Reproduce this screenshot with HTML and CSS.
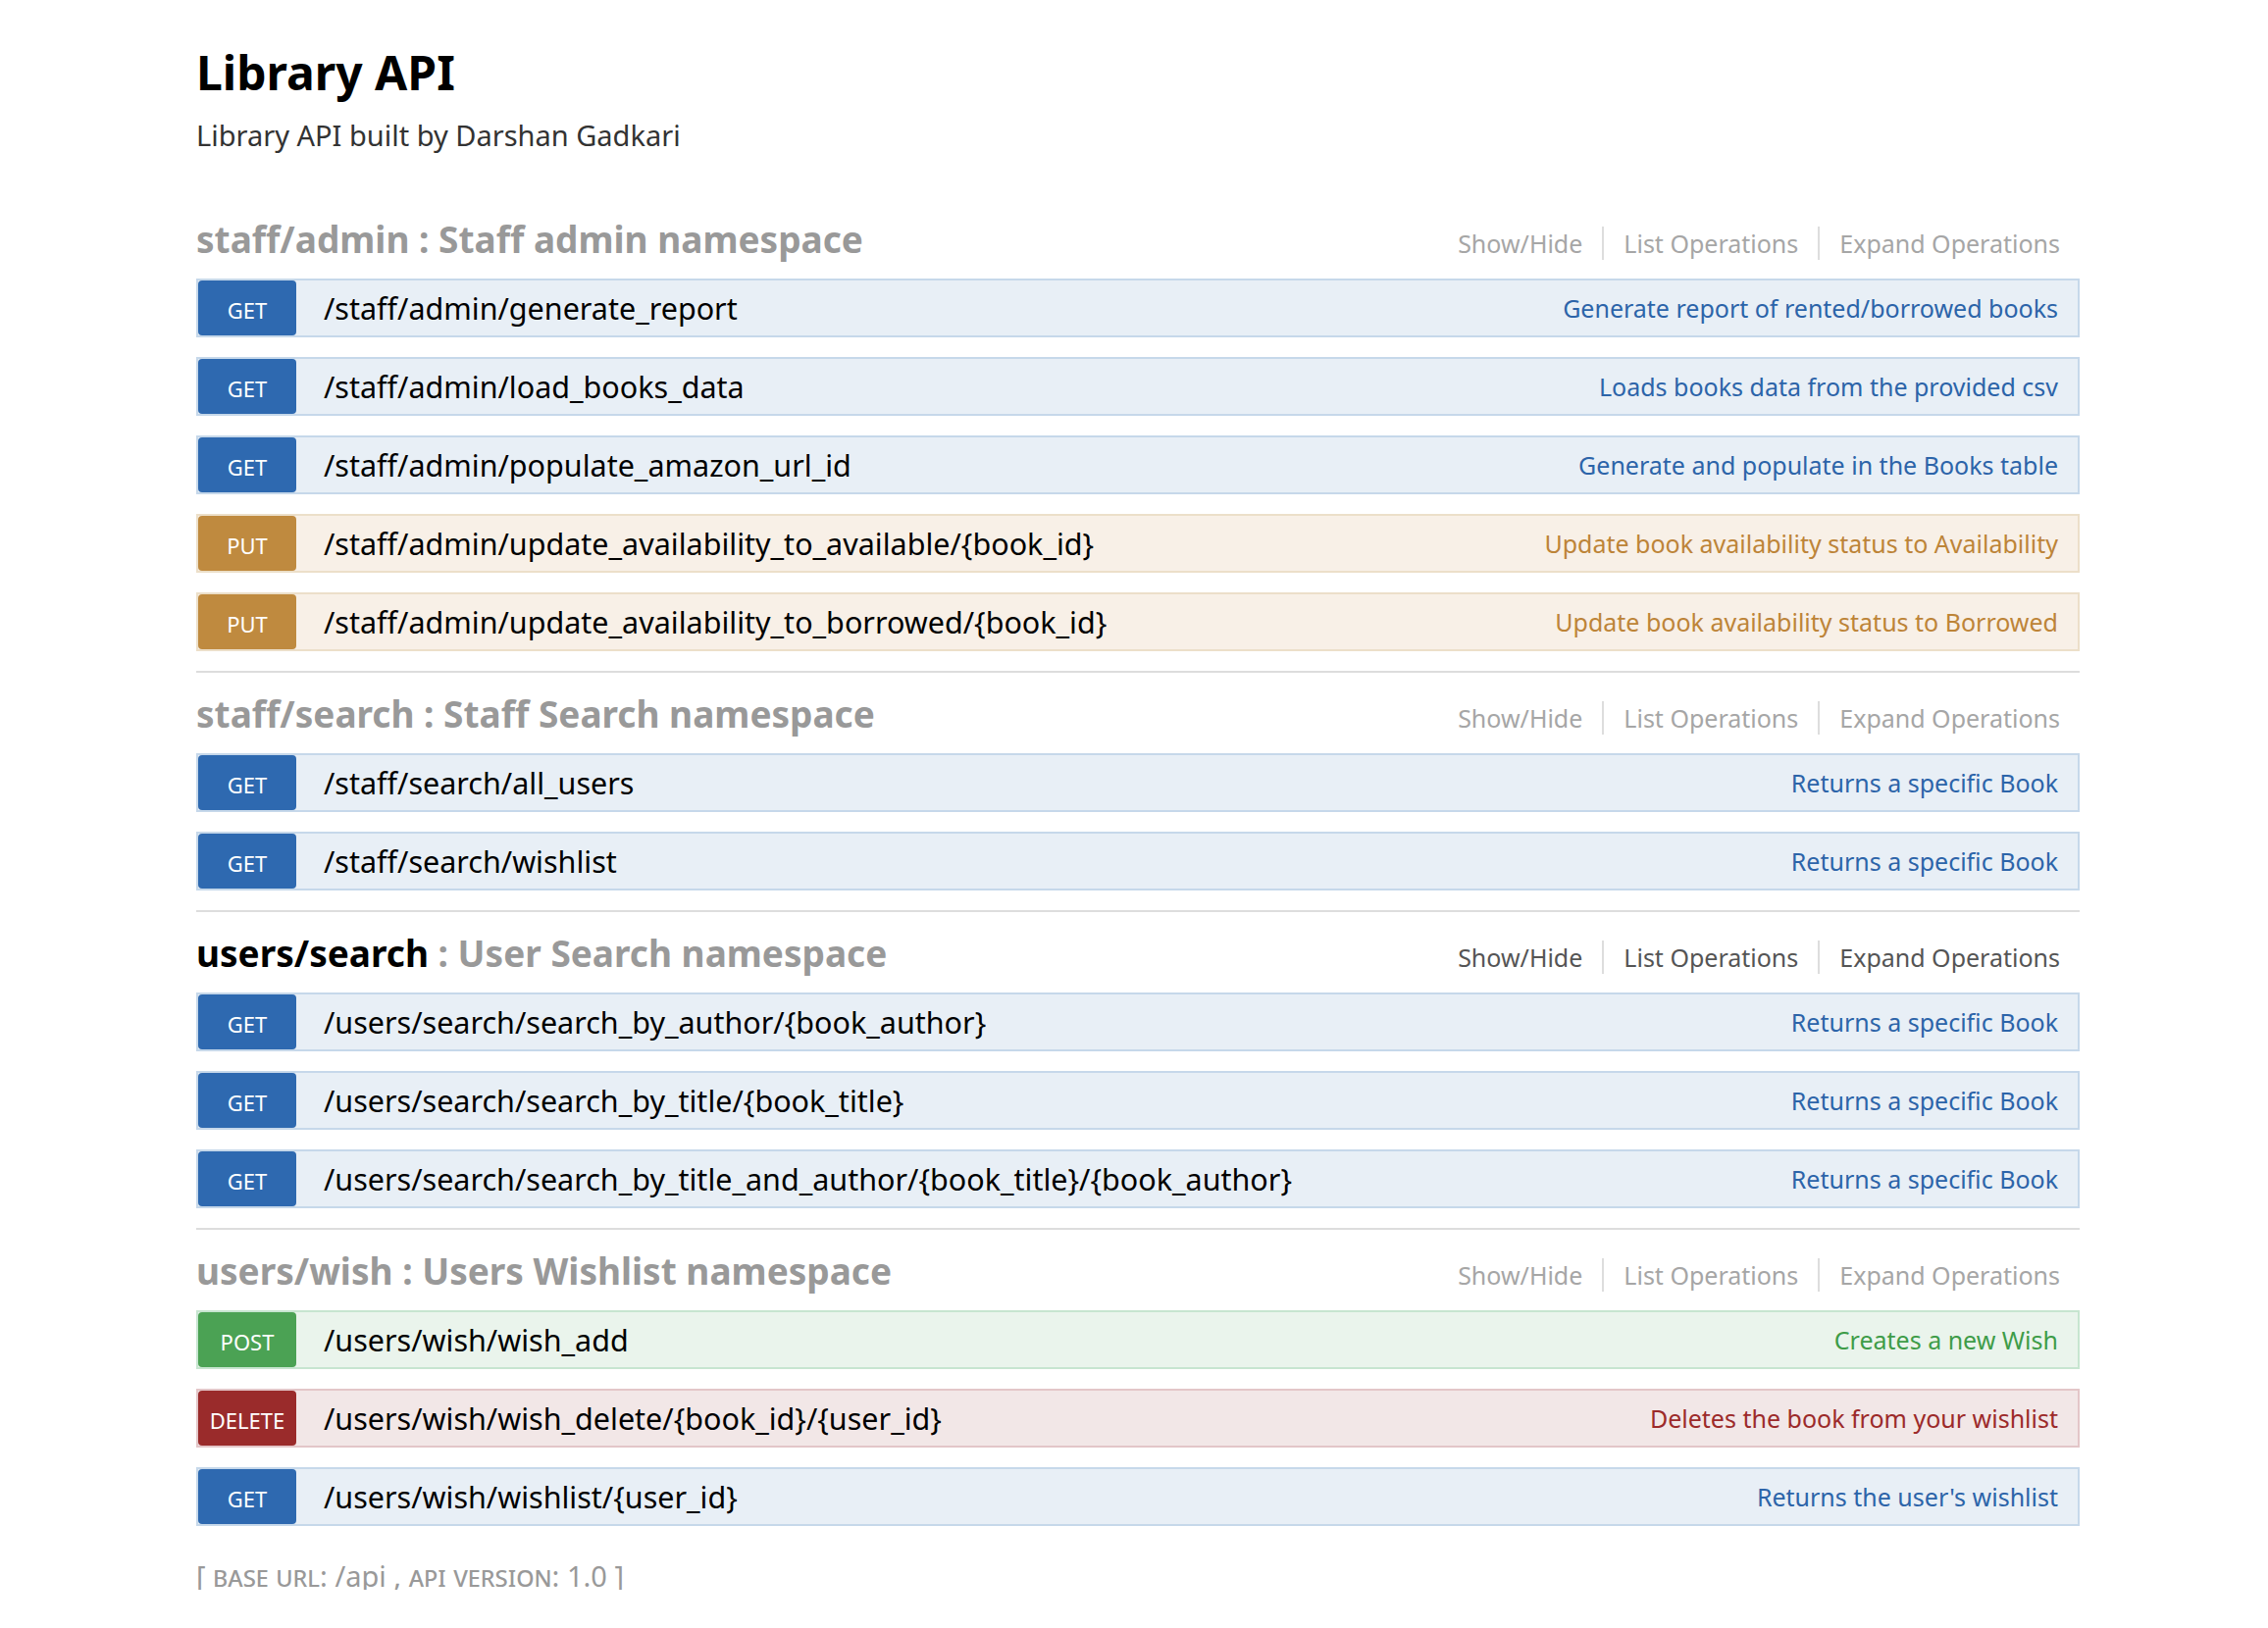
FILE: index.html
```html
<!DOCTYPE html>
<html lang="en">
<head>
<meta charset="utf-8">
<title>Library API</title>
<link rel="stylesheet" href="styles.css">
</head>
<body>
<div class="wrap">
  <div class="info">
    <div class="info-title">Library API</div>
    <div class="info-desc">Library API built by Darshan Gadkari</div>
  </div>

  <ul class="resources">
    <li class="resource">
      <div class="res-heading">
        <h2><a href="#">staff/admin</a> : Staff admin namespace</h2>
        <ul class="options">
          <li><a href="#">Show/Hide</a></li>
          <li><a href="#">List Operations</a></li>
          <li><a href="#">Expand Operations</a></li>
        </ul>
      </div>
      <ul class="ops">
        <li class="op get"><div class="op-heading"><span class="method">GET</span><span class="path">/staff/admin/generate_report</span><span class="summary">Generate report of rented/borrowed books</span></div></li>
        <li class="op get"><div class="op-heading"><span class="method">GET</span><span class="path">/staff/admin/load_books_data</span><span class="summary">Loads books data from the provided csv</span></div></li>
        <li class="op get"><div class="op-heading"><span class="method">GET</span><span class="path">/staff/admin/populate_amazon_url_id</span><span class="summary">Generate and populate in the Books table</span></div></li>
        <li class="op put"><div class="op-heading"><span class="method">PUT</span><span class="path">/staff/admin/update_availability_to_available/{book_id}</span><span class="summary">Update book availability status to Availability</span></div></li>
        <li class="op put"><div class="op-heading"><span class="method">PUT</span><span class="path">/staff/admin/update_availability_to_borrowed/{book_id}</span><span class="summary">Update book availability status to Borrowed</span></div></li>
      </ul>
    </li>

    <li class="resource">
      <div class="res-heading">
        <h2><a href="#">staff/search</a> : Staff Search namespace</h2>
        <ul class="options">
          <li><a href="#">Show/Hide</a></li>
          <li><a href="#">List Operations</a></li>
          <li><a href="#">Expand Operations</a></li>
        </ul>
      </div>
      <ul class="ops">
        <li class="op get"><div class="op-heading"><span class="method">GET</span><span class="path">/staff/search/all_users</span><span class="summary">Returns a specific Book</span></div></li>
        <li class="op get"><div class="op-heading"><span class="method">GET</span><span class="path">/staff/search/wishlist</span><span class="summary">Returns a specific Book</span></div></li>
      </ul>
    </li>

    <li class="resource hovered">
      <div class="res-heading">
        <h2><a href="#">users/search</a> : User Search namespace</h2>
        <ul class="options">
          <li><a href="#">Show/Hide</a></li>
          <li><a href="#">List Operations</a></li>
          <li><a href="#">Expand Operations</a></li>
        </ul>
      </div>
      <ul class="ops">
        <li class="op get"><div class="op-heading"><span class="method">GET</span><span class="path">/users/search/search_by_author/{book_author}</span><span class="summary">Returns a specific Book</span></div></li>
        <li class="op get"><div class="op-heading"><span class="method">GET</span><span class="path">/users/search/search_by_title/{book_title}</span><span class="summary">Returns a specific Book</span></div></li>
        <li class="op get"><div class="op-heading"><span class="method">GET</span><span class="path">/users/search/search_by_title_and_author/{book_title}/{book_author}</span><span class="summary">Returns a specific Book</span></div></li>
      </ul>
    </li>

    <li class="resource">
      <div class="res-heading">
        <h2><a href="#">users/wish</a> : Users Wishlist namespace</h2>
        <ul class="options">
          <li><a href="#">Show/Hide</a></li>
          <li><a href="#">List Operations</a></li>
          <li><a href="#">Expand Operations</a></li>
        </ul>
      </div>
      <ul class="ops">
        <li class="op post"><div class="op-heading"><span class="method">POST</span><span class="path">/users/wish/wish_add</span><span class="summary">Creates a new Wish</span></div></li>
        <li class="op delete"><div class="op-heading"><span class="method">DELETE</span><span class="path">/users/wish/wish_delete/{book_id}/{user_id}</span><span class="summary">Deletes the book from your wishlist</span></div></li>
        <li class="op get"><div class="op-heading"><span class="method">GET</span><span class="path">/users/wish/wishlist/{user_id}</span><span class="summary">Returns the user's wishlist</span></div></li>
      </ul>
    </li>
  </ul>

  <div class="footer">[ <span class="sc">base url</span>: /api , <span class="sc">api version</span>: 1.0 ]</div>
</div>
</body>
</html>
```

FILE: styles.css
```css
* { box-sizing: border-box; }
html, body { margin: 0; padding: 0; background: #fff; }
body {
  font-family: "Noto Sans", "Open Sans", "DejaVu Sans", sans-serif;
  line-height: 1;
  color: #000;
}
.wrap {
  width: 1920px;
  margin-left: 200px;
  padding-top: 49px;
}
.info-title {
  font-size: 48px;
  line-height: 50px;
  font-weight: bold;
  color: #000;
  padding-bottom: 24px;
}
.info-desc {
  font-size: 29px;
  line-height: 30px;
  color: #333;
}
.resources {
  list-style: none;
  margin: 49px 0 0;
  padding: 0;
}
.resource { border-bottom: 2px solid #ddd; }
.resource:last-child { border-bottom: none; }
.res-heading {
  height: 82px;
  display: flex;
  align-items: center;
  justify-content: space-between;
}
.res-heading h2 {
  margin: 0;
  font-size: 37px;
  font-weight: bold;
  line-height: 1;
  color: #999;
}
.res-heading h2 a { color: #999; text-decoration: none; }
.options {
  list-style: none;
  display: flex;
  margin: 10px 0 0;
  padding: 0;
}
.options li {
  padding: 4px 20px;
  border-right: 2px solid #ddd;
  font-size: 25px;
  line-height: 26px;
}
.options li:last-child { border-right: none; }
.options a { color: #a6a6a6; text-decoration: none; }
.resource.hovered h2 a { color: #000; }
.resource.hovered .options a { color: #555; }

.ops { list-style: none; margin: 0; padding: 0; }
.op { margin: 0 0 20px; }
.op-heading {
  display: flex;
  align-items: center;
  height: 60px;
  border: 2px solid #c3d9ec;
  background: #e7eff7;
}
.method {
  flex: none;
  width: 100px;
  height: 56px;
  display: flex;
  align-items: center;
  justify-content: center;
  padding-top: 3px;
  border-radius: 4px;
  color: #fff;
  font-size: 22px;
  text-transform: uppercase;
}
.path {
  padding-left: 28px;
  font-size: 30.5px;
  color: #000;
}
.summary {
  margin-left: auto;
  padding-right: 20px;
  font-size: 25px;
}

.get .op-heading { background: #e8eff6; border-color: #c6d8ea; }
.get .method { background: #2e69b0; }
.get .summary { color: #2c64a9; }

.put .op-heading { background: #f8f0e7; border-color: #ecdfc9; }
.put .method { background: #bf8a3f; }
.put .summary { color: #bd8438; }

.post .op-heading { background: #eaf4ec; border-color: #c7e5d0; }
.post .method { background: #4ba254; }
.post .summary { color: #3e9c48; }

.delete .op-heading { background: #f2e7e7; border-color: #e3c6c8; }
.delete .method { background: #9a2b2b; }
.delete .summary { color: #9c2a2a; }

.footer {
  padding-top: 16px;
  font-size: 29px;
  color: #999;
}
.footer .sc { font-variant: small-caps; }
```
